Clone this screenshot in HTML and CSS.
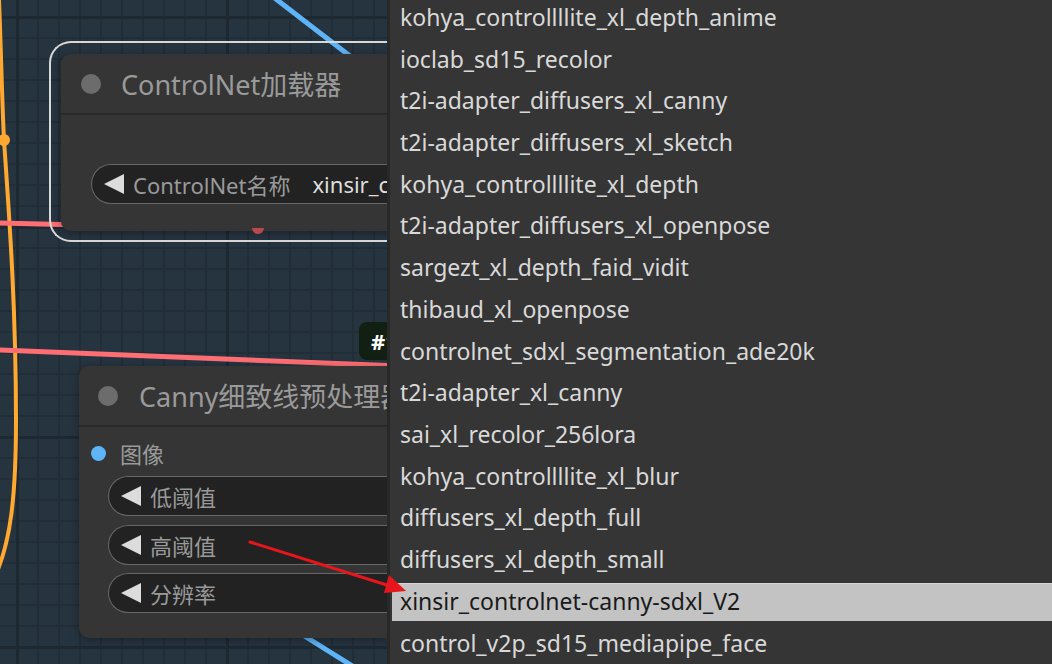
FILE: index.html
```html
<!DOCTYPE html>
<html lang="zh-CN">
<head>
<meta charset="utf-8">
<title>ControlNet</title>
<link rel="stylesheet" href="styles.css">
</head>
<body>
<div class="canvas">
  <svg class="wires" width="1052" height="664" viewBox="0 0 1052 664">
    <path class="w-orange" d="M -1 0 C 1 50, 2 100, 4 140 C 8 200, 16 300, 16 420 C 16 500, 10 540, -3 572"/>
    <circle cx="4" cy="140" r="6" fill="#ffa931"/>
    <path class="w-pink" d="M -2 223 L 120 226"/>
    <path class="w-pink" d="M -2 350 C 100 353, 250 360, 400 366"/>
    <path class="w-blue" d="M 272 -4 L 420 110"/>
    <path class="w-blue" d="M 290 627 L 362 672"/>
  </svg>

  <div class="selection"></div>

  <div class="node node-loader">
    <div class="node-title">
      <span class="title-dot"></span>
      <span class="title-text">ControlNet加载器</span>
    </div>
    <div class="node-body">
      <div class="widget">
        <span class="tri"></span>
        <span class="w-label">ControlNet名称</span>
        <span class="w-value">xinsir_controlnet-canny-sdxl_V2</span>
      </div>
    </div>
    <span class="out-slot"></span>
  </div>

  <div class="badge">#1</div>

  <div class="node node-canny">
    <div class="node-title">
      <span class="title-dot"></span>
      <span class="title-text">Canny细致线预处理器</span>
    </div>
    <div class="node-body">
      <div class="input-row">
        <span class="in-dot"></span>
        <span class="in-label">图像</span>
      </div>
      <div class="widgets">
        <div class="widget"><span class="tri"></span><span class="w-label">低阈值</span></div>
        <div class="widget"><span class="tri"></span><span class="w-label">高阈值</span></div>
        <div class="widget"><span class="tri"></span><span class="w-label">分辨率</span></div>
      </div>
    </div>
  </div>

  <div class="menu">
    <ul class="menu-list">
      <li class="item">kohya_controllllite_xl_depth_anime</li>
      <li class="item">ioclab_sd15_recolor</li>
      <li class="item">t2i-adapter_diffusers_xl_canny</li>
      <li class="item">t2i-adapter_diffusers_xl_sketch</li>
      <li class="item">kohya_controllllite_xl_depth</li>
      <li class="item">t2i-adapter_diffusers_xl_openpose</li>
      <li class="item">sargezt_xl_depth_faid_vidit</li>
      <li class="item">thibaud_xl_openpose</li>
      <li class="item">controlnet_sdxl_segmentation_ade20k</li>
      <li class="item">t2i-adapter_xl_canny</li>
      <li class="item">sai_xl_recolor_256lora</li>
      <li class="item">kohya_controllllite_xl_blur</li>
      <li class="item">diffusers_xl_depth_full</li>
      <li class="item">diffusers_xl_depth_small</li>
      <li class="item active">xinsir_controlnet-canny-sdxl_V2</li>
      <li class="item">control_v2p_sd15_mediapipe_face</li>
    </ul>
  </div>

  <svg class="annotation" width="1052" height="664" viewBox="0 0 1052 664">
    <line x1="250" y1="542" x2="390" y2="586" stroke="#e8161c" stroke-width="3" stroke-linecap="round"/>
    <polygon points="406,591 384,593 389,575" fill="#e8161c"/>
  </svg>
</div>
</body>
</html>
```

FILE: styles.css
```css
* { box-sizing: border-box; }

html, body {
  margin: 0;
  padding: 0;
  background: #263440;
}

body {
  font-family: "Noto Sans", "Noto Sans CJK SC", sans-serif;
}

.canvas {
  position: relative;
  width: 1052px;
  height: 664px;
  overflow: hidden;
  background-color: #263440;
  background-image:
    linear-gradient(to right, #1d2831 3px, transparent 3px),
    linear-gradient(to bottom, #1d2831 3px, transparent 3px),
    linear-gradient(to right, #212d37 2px, transparent 2px),
    linear-gradient(to bottom, #212d37 2px, transparent 2px);
  background-size: 210px 210px, 210px 210px, 21px 21px, 21px 21px;
  background-position: 226px 226px, 226px 226px, 16px 16px, 16px 16px;
}

.wires, .annotation {
  position: absolute;
  left: 0;
  top: 0;
}

.annotation { z-index: 10; }

.wires path { fill: none; }
.w-orange { stroke: #ffa931; stroke-width: 4; }
.w-pink { stroke: #ff6e72; stroke-width: 5; }
.w-blue { stroke: #5fb4f8; stroke-width: 5; }

.selection {
  position: absolute;
  left: 49px;
  top: 41px;
  width: 343px;
  height: 201px;
  border: 2px solid #d8d8d8;
  border-right: none;
  border-radius: 22px 0 0 22px;
}

.node {
  position: absolute;
  background: #353535;
  border-radius: 10px 0 0 10px;
  box-shadow: 0 2px 8px rgba(0, 0, 0, 0.35);
  display: flex;
  flex-direction: column;
}

.node-loader {
  left: 61px;
  top: 54px;
  width: 329px;
  height: 177px;
}

.node-canny {
  left: 79px;
  top: 366px;
  width: 311px;
  height: 272px;
}

.node-title {
  height: 61px;
  display: flex;
  align-items: center;
  gap: 20px;
  padding-left: 20px;
  border-bottom: 2px solid #292929;
  flex-shrink: 0;
  overflow: hidden;
}

.node-canny .node-title {
  padding-left: 19px;
  gap: 21px;
}

.title-dot {
  width: 20px;
  height: 20px;
  border-radius: 50%;
  background: #6c6c6c;
  flex-shrink: 0;
}

.title-text {
  font-size: 27px;
  color: #9a9a9a;
  white-space: nowrap;
  overflow: hidden;
  min-width: 0;
}

.node-loader .node-body {
  padding: 49px 0 0 30px;
}

.widget {
  height: 40px;
  border: 1.5px solid #676767;
  border-right: none;
  border-radius: 20px 0 0 20px;
  background: #222222;
  display: flex;
  align-items: center;
  padding-left: 12px;
  white-space: nowrap;
  overflow: hidden;
}

.tri {
  width: 0;
  height: 0;
  border-top: 10px solid transparent;
  border-bottom: 10px solid transparent;
  border-right: 20px solid #dcdcdc;
  margin-right: 9px;
  flex-shrink: 0;
}

.w-label {
  font-size: 22px;
  color: #9a9a9a;
  flex-shrink: 0;
}

.w-value {
  font-size: 22px;
  color: #dedede;
  margin-left: 22px;
  overflow: hidden;
  min-width: 0;
}

.out-slot {
  position: absolute;
  left: 191px;
  bottom: -3px;
  width: 12px;
  height: 6px;
  border-radius: 0 0 6px 6px;
  background: #b84a4e;
}

.node-canny .node-body {
  padding: 14px 0 0 12px;
}

.input-row {
  height: 24px;
  display: flex;
  align-items: center;
  gap: 14px;
}

.in-dot {
  width: 15px;
  height: 15px;
  border-radius: 50%;
  background: #5db4f8;
}

.in-label {
  font-size: 22px;
  color: #9a9a9a;
}

.widgets {
  margin: 11px 0 0 17px;
  display: flex;
  flex-direction: column;
  gap: 8.5px;
}

.badge {
  position: absolute;
  left: 359px;
  top: 322px;
  width: 31px;
  height: 38px;
  border-radius: 8px 0 0 8px;
  background: #112012;
  color: #ffffff;
  font-weight: bold;
  font-size: 22px;
  line-height: 38px;
  padding-left: 12px;
  white-space: nowrap;
  overflow: hidden;
}

.menu {
  position: absolute;
  left: 387px;
  top: 0;
  right: 0;
  bottom: 0;
  background: #353535;
  border-left: 3px solid #282828;
  overflow: hidden;
  z-index: 5;
}

.menu-list {
  list-style: none;
  margin: -1.2px 0 0 0;
  padding: 0;
  display: flex;
  flex-direction: column;
  gap: 4px;
}

.item {
  height: 37.73px;
  line-height: 37.73px;
  margin-left: 2px;
  padding-left: 8px;
  font-size: 23px;
  color: #d9d9d9;
  white-space: nowrap;
  flex-shrink: 0;
}

.item.active {
  background: #c3c3c3;
  border-top: 1px solid #d4d4d4;
  color: #1a1a1a;
  line-height: 35.73px;
}
```
